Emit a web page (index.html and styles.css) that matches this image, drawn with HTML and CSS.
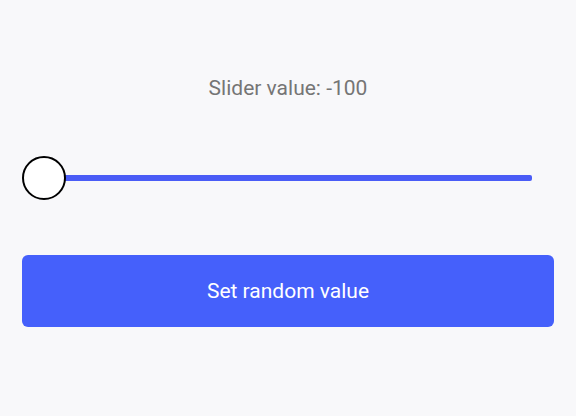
FILE: index.html
```html
<!DOCTYPE html>
<html>
<head>
<meta charset="utf-8">
<link rel="stylesheet" href="styles.css">
</head>
<body>
<main class="page">
  <p class="label">Slider value: -100</p>
  <div class="slider">
    <div class="track"></div>
    <div class="knob"></div>
  </div>
  <button class="btn">Set random value</button>
</main>
</body>
</html>
```

FILE: styles.css
```css
html, body {
  margin: 0;
  padding: 0;
  background: #f8f8fa;
  font-family: Roboto, "Noto Sans", sans-serif;
}
.page {
  display: flex;
  flex-direction: column;
  padding: 0 22px;
}
.label {
  margin: 76px 0 0;
  text-align: center;
  font-size: 21px;
  line-height: 24px;
  color: #757575;
}
.slider {
  position: relative;
  height: 44px;
  margin-top: 56px;
  display: flex;
  align-items: center;
  padding-left: 21px;
  padding-right: 22px;
}
.track {
  flex: 1;
  height: 6px;
  background: #4a5cf6;
  border-radius: 2px;
}
.knob {
  position: absolute;
  left: 0;
  top: 0;
  width: 40px;
  height: 40px;
  border: 2px solid #000;
  border-radius: 50%;
  background: #fff;
}
.btn {
  margin-top: 55px;
  height: 72px;
  border: none;
  border-radius: 6px;
  background: #4560fb;
  color: #fff;
  font-family: Roboto, "Noto Sans", sans-serif;
  font-size: 21px;
  padding: 0;
}
```
